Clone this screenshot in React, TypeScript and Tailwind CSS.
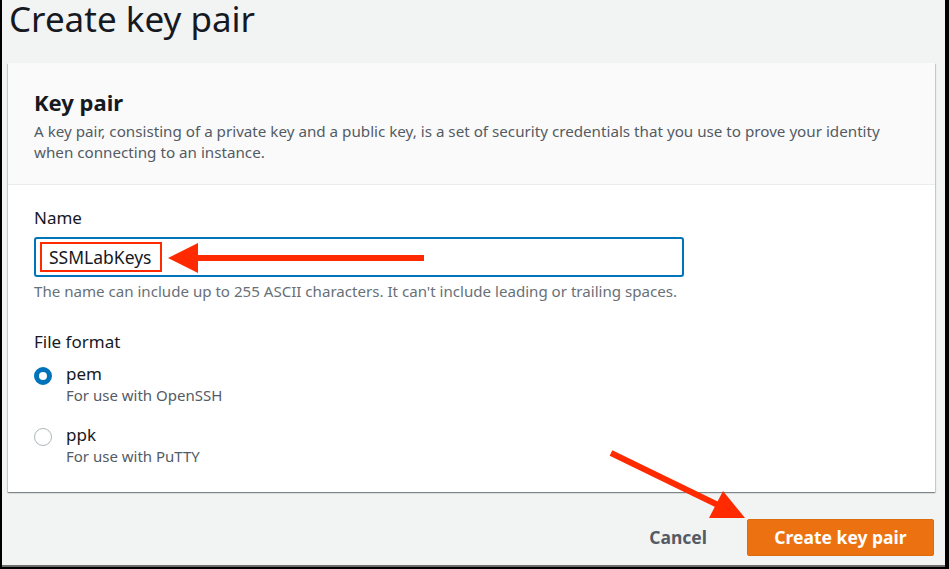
export default function App() {
  return (
    <div className="relative w-[949px] h-[569px] bg-black overflow-hidden" style={{ fontFamily: '"Noto Sans", "Open Sans", sans-serif' }}>
      <div className="ml-[2px] mr-[4px] h-[567px] bg-[#f2f3f3] border-b-2 border-[#6e6e6e] flex flex-col">
        {/* Page title */}
        <h1 className="pl-[7px] h-[63px] text-[35px] leading-[37px] text-[#16191f] whitespace-nowrap">Create key pair</h1>

        {/* Card */}
        <div className="ml-[6px] w-[927px] bg-white shadow-[0_1px_1px_0_rgba(0,28,36,0.3),1px_1px_1px_0_rgba(0,28,36,0.15),-1px_1px_1px_0_rgba(0,28,36,0.15)]">
          <div className="bg-[#fafafa] border-b border-[#eaeded] px-[26px] pt-[24px] pb-[21px]">
            <h2 className="text-[22px] leading-[30px] font-bold text-[#16191f]">Key pair</h2>
            <p className="mt-[4px] text-[15.2px] leading-[21px] text-[#545b64]">
              A key pair, consisting of a private key and a public key, is a set of security credentials that you use to prove your identity when connecting to an instance.
            </p>
          </div>
          <div className="px-[26px] pt-[22px] pb-[25px]">
            <label className="block text-[17px] leading-[22px] text-[#16191f]">Name</label>
            <div className="mt-[8px] w-[650px] h-[40px] border-2 border-[#0073bb] rounded-[3px] flex items-center pl-[4px]">
              <span className="w-[122px] h-[30px] border-2 border-[#ff2a00] pl-[7px] flex items-center text-[17.5px] text-[#16191f] whitespace-nowrap">SSMLabKeys</span>
            </div>
            <p className="mt-[4px] text-[15.1px] leading-[20px] text-[#687078]">
              The name can include up to 255 ASCII characters. It can't include leading or trailing spaces.
            </p>

            <div className="mt-[30px] text-[17px] leading-[22px] text-[#16191f]">File format</div>
            <div className="mt-[10px] flex flex-col gap-[18px]">
              <div className="flex gap-[14px]">
                <div className="mt-[4px] w-[18px] h-[18px] rounded-full border-[5px] border-[#0073bb] bg-white shrink-0" />
                <div>
                  <div className="text-[17px] leading-[22px] text-[#16191f]">pem</div>
                  <div className="text-[15px] leading-[21px] text-[#545b64]">For use with OpenSSH</div>
                </div>
              </div>
              <div className="flex gap-[14px]">
                <div className="mt-[4px] w-[18px] h-[18px] rounded-full border border-[#aab7b8] bg-white shrink-0" />
                <div>
                  <div className="text-[17px] leading-[22px] text-[#16191f]">ppk</div>
                  <div className="text-[15px] leading-[21px] text-[#545b64]">For use with PuTTY</div>
                </div>
              </div>
            </div>
          </div>
        </div>

        {/* Actions */}
        <div className="mt-[27px] w-[932px] flex justify-end items-center gap-[40px]">
          <button className="text-[17.5px] font-bold text-[#545b64]">Cancel</button>
          <button className="w-[187px] h-[37px] rounded-[2px] bg-[#ec7211] border border-[#dd6b10] text-[17.5px] font-bold text-white">Create key pair</button>
        </div>
      </div>

      {/* Annotation arrows */}
      <svg className="absolute inset-0 pointer-events-none" width="949" height="569">
        <line x1="196" y1="258" x2="424" y2="258" stroke="#ff2a00" strokeWidth="6" />
        <polygon points="168,258 198,243 198,273" fill="#ff2a00" />
        <line x1="611" y1="453" x2="720" y2="506" stroke="#ff2a00" strokeWidth="6" />
        <polygon points="745,518 723,491 709,518" fill="#ff2a00" />
      </svg>
    </div>
  );
}
